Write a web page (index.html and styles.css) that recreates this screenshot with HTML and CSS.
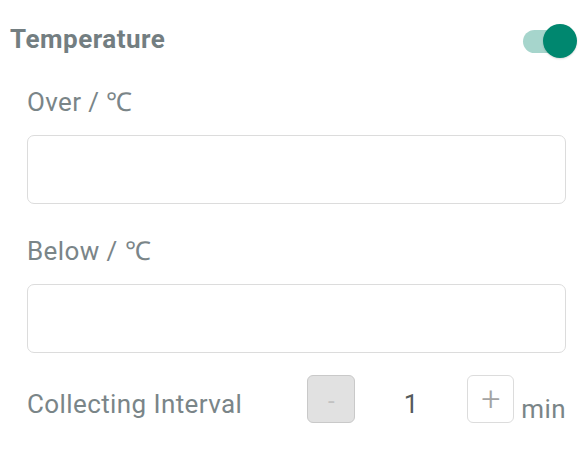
FILE: index.html
```html
<!DOCTYPE html>
<html>
<head>
<meta charset="utf-8">
<link rel="stylesheet" href="styles.css">
</head>
<body>
<div class="page">
  <div class="header">
    <div class="title">Temperature</div>
    <div class="toggle"><span class="track"></span><span class="thumb"></span></div>
  </div>
  <div class="field first">
    <div class="label">Over / ℃</div>
    <div class="input"></div>
  </div>
  <div class="field">
    <div class="label">Below / ℃</div>
    <div class="input"></div>
  </div>
  <div class="interval">
    <div class="ilabel">Collecting Interval</div>
    <div class="btn minus">-</div>
    <div class="value">1</div>
    <div class="btn plus">+</div>
    <div class="unit">min</div>
  </div>
</div>
</body>
</html>
```
FILE: styles.css
```css
html, body {
  margin: 0;
  padding: 0;
  background: #ffffff;
}
body {
  font-family: Roboto, "Liberation Sans", sans-serif;
  font-size: 26px;
  line-height: 28px;
  letter-spacing: 0.4px;
  color: #7a8588;
}
.page {
  width: 583px;
  height: 453px;
}
.header {
  display: flex;
  align-items: center;
  justify-content: space-between;
  height: 78px;
  padding: 0 6px 0 10px;
}
.title {
  font-weight: 700;
  letter-spacing: 0.5px;
  color: #737e81;
}
.toggle {
  position: relative;
  width: 54px;
  height: 34px;
  margin-top: 4px;
}
.track {
  position: absolute;
  left: 0;
  top: 6px;
  width: 42px;
  height: 23px;
  border-radius: 12px;
  background: #a6d5cc;
}
.thumb {
  position: absolute;
  right: 0;
  top: 0;
  width: 34px;
  height: 34px;
  border-radius: 50%;
  background: #00876f;
  box-shadow: 0 1px 2px rgba(0,0,0,0.15);
}
.field {
  padding: 0 17px 0 27px;
  margin-top: 33px;
}
.field.first {
  margin-top: 10px;
}
.label {
  height: 28px;
}
.input {
  margin-top: 19px;
  height: 67px;
  border: 1px solid #dcdcdc;
  border-radius: 7px;
  background: #fff;
}
.interval {
  display: flex;
  align-items: flex-end;
  padding: 0 17px 0 27px;
  margin-top: 22px;
  height: 48px;
}
.ilabel {
  flex: 1;
  margin-bottom: 5px;
}
.btn {
  box-sizing: border-box;
  width: 48px;
  height: 48px;
  border-radius: 6px;
  display: flex;
  align-items: center;
  justify-content: center;
  letter-spacing: 0;
}
.minus {
  background: #e1e1e1;
  border: 1px solid #c9c9c9;
  color: #c2c2c2;
  font-size: 24px;
  padding-top: 3px;
}
.plus {
  width: 47px;
  background: #fff;
  border: 1px solid #dcdcdc;
  color: #a3a3a3;
  font-size: 34px;
  font-weight: 300;
  padding-bottom: 2px;
}
.value {
  width: 112px;
  text-align: center;
  color: #555b5d;
  margin-bottom: 5px;
}
.unit {
  margin-left: 7px;
  color: #7a8588;
}
```
